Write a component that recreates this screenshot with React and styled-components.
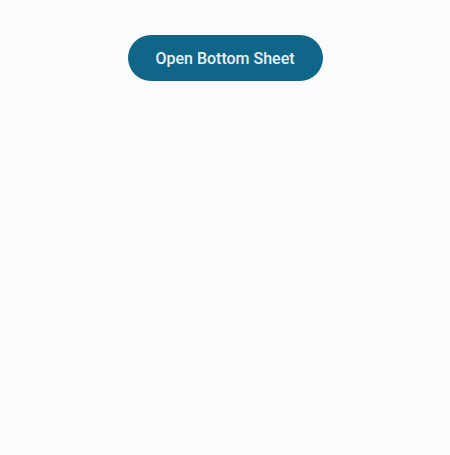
import styled, { createGlobalStyle } from 'styled-components';

const GlobalStyle = createGlobalStyle`
  html, body {
    margin: 0;
    padding: 0;
    background: #fbfafd;
  }
  body {
    font-family: Roboto, "Noto Sans", sans-serif;
  }
`

const Screen = styled.div`
  min-height: 455px;
  display: flex;
  flex-direction: column;
  align-items: center;
  padding-top: 35px;
  box-sizing: border-box;
`

const PillButton = styled.button`
  height: 46px;
  width: 195px;
  border: none;
  border-radius: 23px;
  background: #0f6688;
  color: #e9f1f5;
  font-family: Roboto, "Noto Sans", sans-serif;
  font-size: 16px;
  font-weight: 500;
  letter-spacing: 0;
  cursor: pointer;
`

const App = () => {
    return (
        <>
            <GlobalStyle />
            <Screen>
                <PillButton>Open Bottom Sheet</PillButton>
            </Screen>
        </>
    )
}

export default App
